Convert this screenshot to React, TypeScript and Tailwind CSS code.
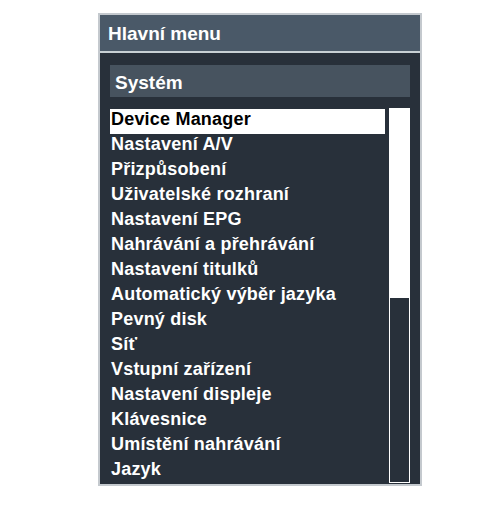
const ITEMS = [
  'Device Manager',
  'Nastavení A/V',
  'Přizpůsobení',
  'Uživatelské rozhraní',
  'Nastavení EPG',
  'Nahrávání a přehrávání',
  'Nastavení titulků',
  'Automatický výběr jazyka',
  'Pevný disk',
  'Síť',
  'Vstupní zařízení',
  'Nastavení displeje',
  'Klávesnice',
  'Umístění nahrávání',
  'Jazyk',
];

export default function App() {
  const selected = 0;

  return (
    <div
      className="w-[500px] h-[507px] bg-white pt-[13px]"
      style={{ fontFamily: '"Liberation Sans", Arial, sans-serif' }}
    >
      <div className="ml-[98px] w-[324px] border-2 border-[#c4c9ce] bg-[#28303a]">
        {/* Header */}
        <div className="h-[38px] bg-[#4a5968] pl-[8px] pt-[8px] border-b-2 border-[#c8d0d4]">
          <span className="block text-[19px] leading-[22px] font-bold text-white">
            Hlavní menu
          </span>
        </div>

        {/* Body */}
        <div className="pt-[12px] pl-[10px] pr-[10px]">
          <div className="h-[32px] bg-[#47535f] pl-[5px] pt-[7px]">
            <span className="block text-[19px] leading-[22px] font-bold text-white">
              Systém
            </span>
          </div>

          <div className="flex mt-[11px]">
            <ul className="w-[275px] mt-[1px]">
              {ITEMS.map((item, idx) => (
                <li
                  key={item}
                  className={`h-[25px] pl-[1px] text-[18px] leading-[20px] tracking-[0.2px] font-bold whitespace-nowrap ${
                    idx === selected ? 'bg-white text-black' : 'text-white'
                  }`}
                >
                  {item}
                </li>
              ))}
            </ul>

            {/* Scrollbar */}
            <div className="ml-[4px] w-[21px] h-[375px] border border-white flex flex-col">
              <div className="h-[189px] bg-white" />
              <div className="flex-1 bg-[#28303a]" />
            </div>
          </div>
        </div>
      </div>
    </div>
  );
}
